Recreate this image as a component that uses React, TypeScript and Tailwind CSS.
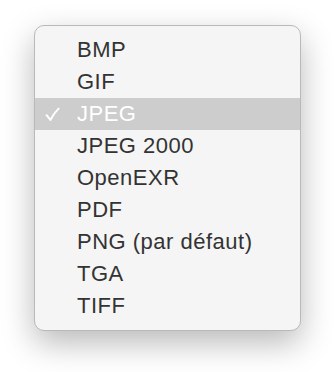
const formats = [
  "BMP",
  "GIF",
  "JPEG",
  "JPEG 2000",
  "OpenEXR",
  "PDF",
  "PNG (par défaut)",
  "TGA",
  "TIFF",
];

const selected = "JPEG";

function Check() {
  return (
    <svg width="15" height="15" viewBox="0 0 15 15" fill="none">
      <path
        d="M1.6 8.2 L5.4 13 Q8.6 6.4 13.6 1.6"
        stroke="white"
        strokeWidth="2"
        strokeLinecap="round"
        strokeLinejoin="round"
      />
    </svg>
  );
}

export default function App() {
  return (
    <div className="h-[372px] w-[334px] bg-white pl-[34px] pt-[25px] font-['Liberation_Sans',Arial,sans-serif]">
      <div className="w-[267px] rounded-[10px] border border-[#b9b9b9] bg-[#f5f5f5] py-[8px] shadow-[0_12px_32px_rgba(0,0,0,0.28)]">
        {formats.map((f) => {
          const on = f === selected;
          return (
            <div
              key={f}
              className={`flex h-8 items-center text-[22px] leading-none tracking-[0.5px] ${
                on ? "bg-[#cdcdcd] text-white" : "text-[#333333]"
              }`}
            >
              <span className="flex w-[42px] pl-[10px]">{on ? <Check /> : null}</span>
              <span>{f}</span>
            </div>
          );
        })}
      </div>
    </div>
  );
}
